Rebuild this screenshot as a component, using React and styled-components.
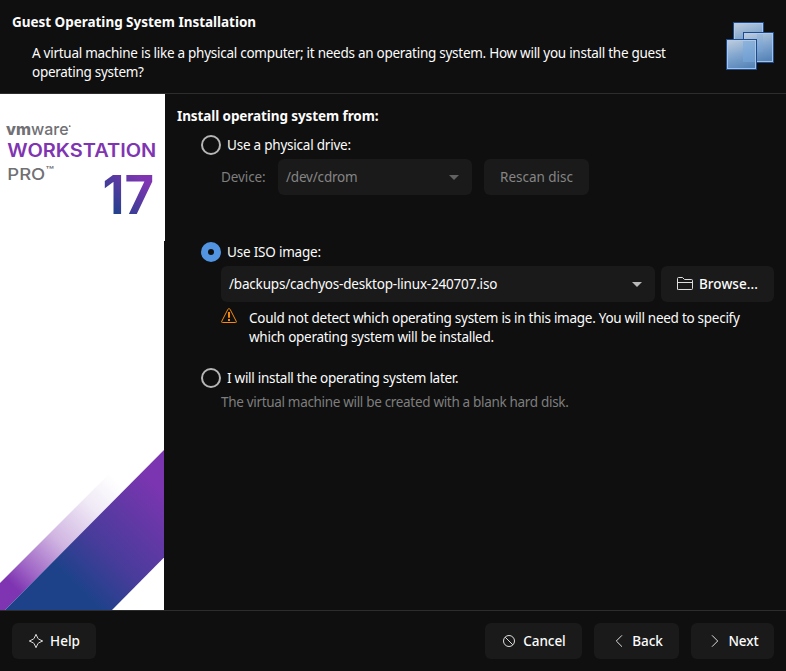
import React from "react";
import styled, { createGlobalStyle } from "styled-components";

const GlobalStyle = createGlobalStyle`
  * { box-sizing: border-box; }
  body {
    margin: 0;
    background: #0f0f0f;
    color: #fcfcfc;
    font: 400 13.5px/19px "Noto Sans", sans-serif;
  }
`;

const Window = styled.div`
  width: 786px;
  height: 671px;
  display: grid;
  grid-template-rows: 94px 516px 61px;
  overflow: hidden;
  background: #0f0f0f;
`;

const Header = styled.header`
  display: flex;
  justify-content: space-between;
  padding: 13px 12px 0;
  border-bottom: 1px solid #2d2d2d;
`;

const HeaderIcon = styled.svg`
  width: 48px;
  height: 48px;
  margin-top: 9px;
  flex: none;
`;

const Title = styled.h1`
  margin: 0;
  font-size: 13.5px;
  line-height: 19px;
  font-weight: 700;
  letter-spacing: ${(p) => p.$tracking || 0}px;
`;

const Description = styled.p`
  width: 650px;
  margin: 12px 0 0 20px;
  letter-spacing: -0.27px;
`;

const Body = styled.div`
  display: grid;
  grid-template-columns: 165px 1fr;
`;

const Banner = styled.svg`
  width: 165px;
  height: 516px;
  display: block;
`;

const Main = styled.main`
  padding: 13px 12px 0;
`;

const Option = styled.label`
  display: flex;
  align-items: center;
  gap: 6px;
  height: 20px;
  margin: ${(p) => p.$top}px 0 0 24px;
  letter-spacing: ${(p) => p.$tracking}px;
`;

const Radio = styled.span`
  width: 20px;
  height: 20px;
  border-radius: 50%;
  border: ${(p) => (p.$checked ? "7px solid #5294e2" : "2px solid #b6b6b6")};
`;

const Row = styled.div`
  display: flex;
  align-items: center;
  margin: 4px 0 0 44px;
`;

const FieldLabel = styled.span`
  width: 57px;
  color: #7e7e7e;
  letter-spacing: -0.09px;
`;

const Combo = styled.div`
  display: flex;
  align-items: center;
  justify-content: space-between;
  width: ${(p) => p.$width}px;
  height: 36px;
  padding: 0 13px 0 8px;
  margin-right: ${(p) => p.$gap}px;
  border-radius: 6px;
  background: #1a1a1a;
  color: ${(p) => (p.$disabled ? "#858585" : "#fcfcfc")};
  letter-spacing: -0.19px;
`;

const Arrow = styled.svg`
  width: 10px;
  height: 5px;
  fill: ${(p) => (p.$disabled ? "#626262" : "#b9b9b9")};
`;

const Button = styled.button`
  display: flex;
  align-items: center;
  justify-content: center;
  gap: 6px;
  width: ${(p) => p.$width}px;
  height: 36px;
  padding: 0;
  border: 0;
  border-radius: 6px;
  background: #1a1a1a;
  color: #fcfcfc;
  font: inherit;
  font-weight: 500;
  letter-spacing: ${(p) => p.$tracking || 0}px;
  &:disabled { color: #858585; font-weight: 400; }
`;

const Icon = styled.svg`
  width: 16px;
  height: 16px;
  flex: none;
  fill: none;
  stroke: #dedede;
  stroke-width: 1;
`;

const Warning = styled.div`
  display: flex;
  gap: 12px;
  margin: 6px 0 0 44px;
`;

const WarningText = styled.p`
  width: 500px;
  margin: 1px 0 0;
  letter-spacing: -0.27px;
`;

const Hint = styled.p`
  margin: 5px 0 0 44px;
  color: #7e7e7e;
  letter-spacing: -0.32px;
`;

const Footer = styled.footer`
  display: flex;
  gap: 12px;
  padding: 12px 12px 0;
  border-top: 1px solid #2d2d2d;
`;

const Spacer = styled.div`
  flex: 1;
`;

function ComboArrow({ disabled }) {
  return (
    <Arrow viewBox="0 0 10 5" $disabled={disabled}>
      <path d="M0 0H10L5 5Z" />
    </Arrow>
  );
}

function MachinesIcon() {
  return (
    <HeaderIcon viewBox="0 0 48 48">
      <defs>
        <linearGradient id="pane" x1="0.2" y1="0" x2="0.5" y2="1">
          <stop offset="0" stopColor="#bccbdc" />
          <stop offset="0.5" stopColor="#83a7cf" />
          <stop offset="1" stopColor="#5785b9" />
        </linearGradient>
      </defs>
      {[[7, 0], [17, 10], [0, 17]].map(([x, y]) => (
        <g key={x}>
          <rect x={x + 0.5} y={y + 0.5} width="30" height="30" fill="url(#pane)" stroke="#1f4a8c" />
          <rect x={x + 1.5} y={y + 1.5} width="28" height="28" fill="none" stroke="#b0cbea" strokeOpacity="0.85" />
        </g>
      ))}
      <path d="M17 19H29V40H17Z" fill="#78a9df" fillOpacity="0.55" />
      <path d="M31 12H37V30H31Z" fill="#78a9df" fillOpacity="0.25" />
    </HeaderIcon>
  );
}

function ProductBanner() {
  return (
    <Banner viewBox="0 0 165 516">
      <defs>
        <linearGradient id="band" gradientUnits="userSpaceOnUse" x1="62" y1="478" x2="153" y2="387">
          <stop offset="0" stopColor="#1d428a" />
          <stop offset="0.35" stopColor="#473c9a" />
          <stop offset="1" stopColor="#7b35b0" />
        </linearGradient>
        <linearGradient id="fade" gradientUnits="userSpaceOnUse" x1="14" y1="492" x2="127" y2="379">
          <stop offset="0" stopColor="#7f35b2" />
          <stop offset="0.14" stopColor="#a067c6" />
          <stop offset="0.4" stopColor="#d1b6e2" />
          <stop offset="0.7" stopColor="#f0eaf6" />
          <stop offset="0.92" stopColor="#ffffff" />
        </linearGradient>
        <linearGradient id="version" gradientUnits="userSpaceOnUse" x1="110" y1="118" x2="142" y2="84">
          <stop offset="0" stopColor="#1d428a" />
          <stop offset="1" stopColor="#7f35b2" />
        </linearGradient>
      </defs>
      <path d="M0 0H165V147H164V516H0Z" fill="#fff" />
      <path d="M0 489L128 361L164 356L5 516H0Z" fill="url(#fade)" />
      <path d="M5 516L164 356V463.500L112 516Z" fill="url(#band)" />
      <g fontFamily="Inter, sans-serif" fill="#717074">
        <text x="6" y="40.500" fontSize="16.500" fontWeight="800" textLength="25" lengthAdjust="spacingAndGlyphs">vm</text>
        <text x="31" y="40.500" fontSize="16.500" fontWeight="500" textLength="37.500" lengthAdjust="spacingAndGlyphs">ware</text>
        <circle cx="69.700" cy="32.200" r="0.900" />
        <text x="7.300" y="86" fontSize="16.500" fontWeight="500" textLength="38" lengthAdjust="spacingAndGlyphs">PRO</text>
        <text x="45.500" y="80" fontSize="10" fontWeight="600" textLength="8.500" lengthAdjust="spacingAndGlyphs">™</text>
        <text x="7.300" y="63" fontSize="18" fontWeight="600" fill="#7f35b2" textLength="149" lengthAdjust="spacingAndGlyphs">WORKSTATION</text>
      </g>
      <text x="102.500" y="120" fontFamily="Inter, sans-serif" fontSize="53" fontWeight="700" fill="url(#version)" textLength="51.500" lengthAdjust="spacingAndGlyphs">17</text>
    </Banner>
  );
}

export default function App() {
  return (
    <Window>
      <GlobalStyle />
      <Header>
        <div>
          <Title $tracking={-0.03}>Guest Operating System Installation</Title>
          <Description>
            A virtual machine is like a physical computer; it needs an operating system. How will you install the guest
            operating system?
          </Description>
        </div>
        <MachinesIcon />
      </Header>
      <Body>
        <ProductBanner />
        <Main>
          <Title as="h2" $tracking={-0.09}>Install operating system from:</Title>
          <Option $top={9} $tracking={-0.22}>
            <Radio />
            Use a physical drive:
          </Option>
          <Row>
            <FieldLabel>Device:</FieldLabel>
            <Combo $width={194} $gap={12} $disabled>
              /dev/cdrom
              <ComboArrow disabled />
            </Combo>
            <Button $width={105} $tracking={-0.02} disabled>Rescan disc</Button>
          </Row>
          <Option $top={47} $tracking={-0.2}>
            <Radio $checked />
            Use ISO image:
          </Option>
          <Row>
            <Combo $width={434} $gap={6}>
              /backups/cachyos-desktop-linux-240707.iso
              <ComboArrow />
            </Combo>
            <Button $width={113} $tracking={0.06}>
              <Icon viewBox="0 0 16 16">
                <path d="M.5 12.500V1.500Q.5.500 1.500.500H5.500L7.500 2.500H14.500Q15.500 2.500 15.500 3.500V11.500Q15.500 12.500 14.500 12.500H1.500Q.5 12.500.5 11.500M.5 5.500H15.500" transform="translate(0 1)" />
              </Icon>
              Browse...
            </Button>
          </Row>
          <Warning>
            <Icon viewBox="0 0 16 16">
              <path d="M8 .6Q8.700.6 9.200 1.500L15.200 13.200Q15.900 14.500 14.500 14.500H1.500Q.1 14.500.8 13.200L6.800 1.500Q7.300.6 8 .6Z" stroke="#f68a10" />
              <path d="M8 4V9.800M8 11V13" stroke="#f68a10" strokeWidth="2" />
            </Icon>
            <WarningText>
              Could not detect which operating system is in this image. You will need to specify which operating system
              will be installed.
            </WarningText>
          </Warning>
          <Option $top={21} $tracking={-0.27}>
            <Radio />
            I will install the operating system later.
          </Option>
          <Hint>The virtual machine will be created with a blank hard disk.</Hint>
        </Main>
      </Body>
      <Footer>
        <Button $width={84}>
          <Icon viewBox="0 0 16 16">
            <path d="M8 1.300L9.800 5.200Q10.200 5.800 10.800 6.200L14.700 8L10.800 9.800Q10.200 10.200 9.800 10.800L8 14.700L6.200 10.800Q5.800 10.200 5.200 9.800L1.300 8L5.200 6.200Q5.800 5.800 6.200 5.200Z" />
          </Icon>
          Help
        </Button>
        <Spacer />
        <Button $width={97} $tracking={-0.08}>
          <Icon viewBox="0 0 16 16">
            <circle cx="8" cy="8" r="5.500" />
            <path d="M4.200 4.200L11.800 11.800" />
          </Icon>
          Cancel
        </Button>
        <Button $width={85} $tracking={-0.08}>
          <Icon viewBox="0 0 16 16">
            <path d="M12 2.300L6.300 8L12 13.700" />
          </Icon>
          Back
        </Button>
        <Button $width={83} $tracking={-0.08}>
          <Icon viewBox="0 0 16 16">
            <path d="M6 2.300L11.700 8L6 13.700" />
          </Icon>
          Next
        </Button>
      </Footer>
    </Window>
  );
}
